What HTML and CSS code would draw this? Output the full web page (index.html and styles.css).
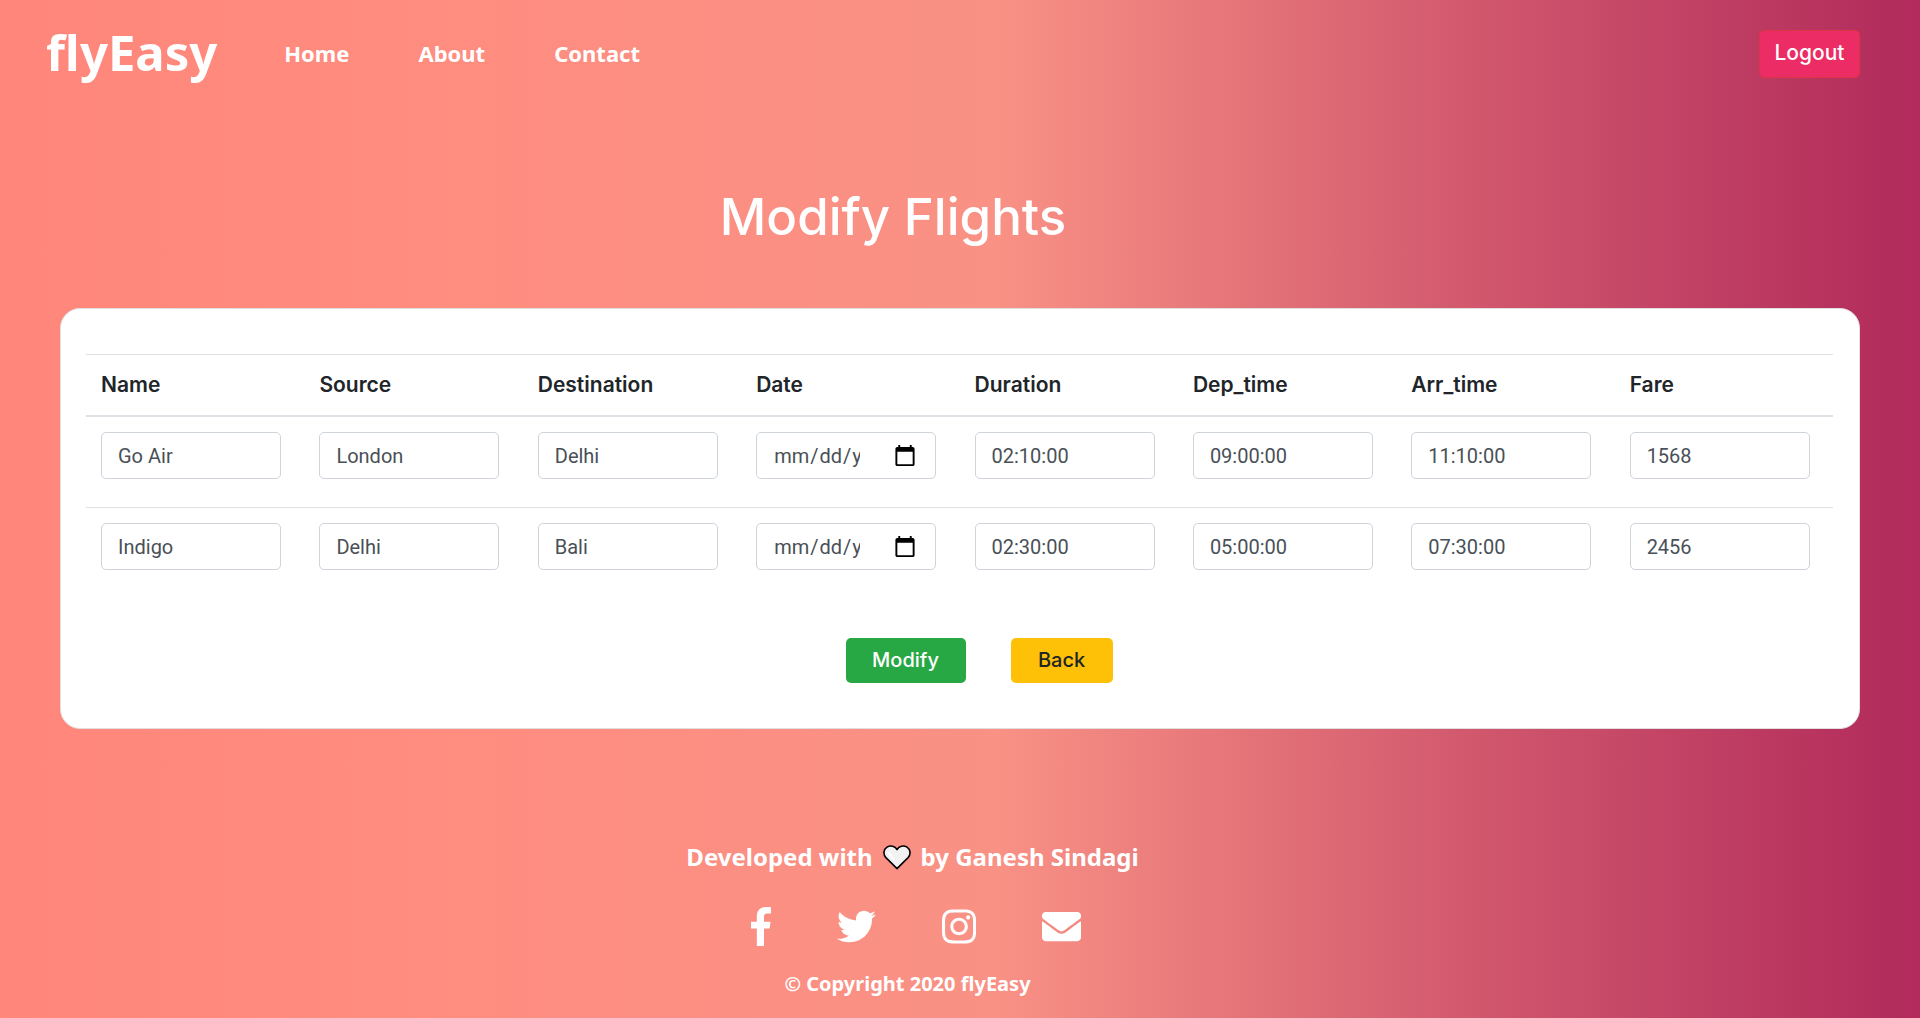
FILE: index.html
```html
<!DOCTYPE html>
<html lang="en">
<head>
<meta charset="utf-8">
<meta name="viewport" content="width=device-width, initial-scale=1">
<title>flyEasy - Modify Flights</title>
<link rel="stylesheet" href="styles.css">
</head>
<body>
<header class="navbar">
  <a class="brand" href="#">flyEasy</a>
  <nav class="nav-links">
    <a href="#">Home</a>
    <a href="#">About</a>
    <a href="#">Contact</a>
  </nav>
  <button class="btn btn-logout" type="button">Logout</button>
</header>
<main>
  <h1 class="title">Modify Flights</h1>
  <form class="card">
    <table class="flights">
      <thead>
        <tr><th scope="col">Name</th><th scope="col">Source</th><th scope="col">Destination</th><th scope="col">Date</th><th scope="col">Duration</th><th scope="col">Dep_time</th><th scope="col">Arr_time</th><th scope="col">Fare</th></tr>
      </thead>
      <tbody>
        <tr>
          <td><input type="text" aria-label="Name" value="Go Air"></td>
          <td><input type="text" aria-label="Source" value="London"></td>
          <td><input type="text" aria-label="Destination" value="Delhi"></td>
          <td><input type="date" aria-label="Date"></td>
          <td><input type="text" aria-label="Duration" value="02:10:00"></td>
          <td><input type="text" aria-label="Departure time" value="09:00:00"></td>
          <td><input type="text" aria-label="Arrival time" value="11:10:00"></td>
          <td><input type="text" aria-label="Fare" value="1568"></td>
        </tr>
        <tr>
          <td><input type="text" aria-label="Name" value="Indigo"></td>
          <td><input type="text" aria-label="Source" value="Delhi"></td>
          <td><input type="text" aria-label="Destination" value="Bali"></td>
          <td><input type="date" aria-label="Date"></td>
          <td><input type="text" aria-label="Duration" value="02:30:00"></td>
          <td><input type="text" aria-label="Departure time" value="05:00:00"></td>
          <td><input type="text" aria-label="Arrival time" value="07:30:00"></td>
          <td><input type="text" aria-label="Fare" value="2456"></td>
        </tr>
      </tbody>
    </table>
    <div class="actions">
      <button class="btn btn-modify" type="submit">Modify</button>
      <button class="btn btn-back" type="button">Back</button>
    </div>
  </form>
</main>
<footer class="footer">
  <p class="credit">Developed with
    <svg class="heart" viewBox="0 0 28 25" role="img" aria-label="love"><path d="M14 23.6 2.9 12.6C-.2 9.300.6 4.200 4 2.100 7.600-.1 12 1 14 4.600 16 1 20.400-.1 24 2.100 27.400 4.200 28.200 9.300 25.100 12.600Z" fill="#f2f2f2" stroke="#000" stroke-width="1.600" stroke-linejoin="round"/><path d="M5 7.500c1 4 3.500 6.500 6.500 8.500 1-1 .6-2.400-.6-3.800C9 10 6.500 6 5 7.500Z" fill="#fff"/></svg>
    by Ganesh Sindagi</p>
  <div class="social">
    <a href="#" aria-label="Facebook"><svg viewBox="0 0 264 512"><path d="M76.7 512V283H0v-91h76.700v-71.700C76.700 42.400 124.300 0 193.800 0c33.300 0 61.900 2.500 70.200 3.600V85h-48.200c-37.800 0-45.100 18-45.100 44.300V192H256l-11.700 91h-73.600v229z"/></svg></a>
    <a href="#" aria-label="Twitter"><svg viewBox="0 0 512 512"><path d="M459.370 151.716c.325 4.548.325 9.097.325 13.645 0 138.720-105.583 298.558-298.558 298.558-59.452 0-114.680-17.219-161.137-47.106 8.447.974 16.568 1.299 25.340 1.299 49.055 0 94.213-16.568 130.274-44.832-46.132-.975-84.792-31.188-98.112-72.772 6.498.974 12.995 1.624 19.818 1.624 9.421 0 18.843-1.300 27.614-3.573-48.081-9.747-84.143-51.980-84.143-102.985v-1.299c13.969 7.797 30.214 12.670 47.431 13.319-28.264-18.843-46.781-51.005-46.781-87.391 0-19.492 5.197-37.360 14.294-52.954 51.655 63.675 129.300 105.258 216.365 109.807-1.624-7.797-2.599-15.918-2.599-24.040 0-57.828 46.782-104.934 104.934-104.934 30.213 0 57.502 12.670 76.670 33.137 23.715-4.548 46.456-13.320 66.599-25.340-7.798 24.366-24.366 44.833-46.132 57.827 21.117-2.273 41.584-8.122 60.426-16.243-14.292 20.791-32.161 39.308-52.628 54.253z"/></svg></a>
    <a href="#" aria-label="Instagram"><svg viewBox="0 0 448 512"><path d="M224.100 141c-63.600 0-114.900 51.300-114.900 114.900s51.300 114.900 114.900 114.900S339 319.500 339 255.900 287.700 141 224.100 141zm0 189.600c-41.100 0-74.700-33.500-74.700-74.700s33.500-74.700 74.700-74.700 74.700 33.500 74.700 74.700-33.600 74.700-74.700 74.700zm146.400-194.300c0 14.900-12 26.800-26.800 26.800-14.900 0-26.800-12-26.800-26.800s12-26.800 26.800-26.800 26.800 12 26.800 26.800zm76.100 27.200c-1.700-35.900-9.900-67.700-36.200-93.900-26.200-26.200-58-34.400-93.900-36.200-37-2.100-147.900-2.100-184.900 0-35.800 1.700-67.600 9.900-93.900 36.100s-34.400 58-36.200 93.900c-2.100 37-2.100 147.900 0 184.900 1.700 35.900 9.900 67.700 36.200 93.900s58 34.400 93.900 36.200c37 2.100 147.900 2.100 184.900 0 35.900-1.700 67.700-9.900 93.900-36.200 26.200-26.200 34.400-58 36.200-93.900 2.100-37 2.100-147.800 0-184.800zM398.800 388c-7.800 19.600-22.900 34.700-42.600 42.600-29.500 11.700-99.500 9-132.100 9s-102.700 2.600-132.100-9c-19.600-7.800-34.700-22.900-42.600-42.600-11.700-29.500-9-99.500-9-132.100s-2.600-102.700 9-132.100c7.800-19.600 22.900-34.700 42.600-42.600 29.500-11.700 99.500-9 132.100-9s102.700-2.600 132.100 9c19.600 7.800 34.700 22.900 42.600 42.600 11.700 29.500 9 99.500 9 132.100s2.700 102.700-9 132.100z"/></svg></a>
    <a href="#" aria-label="Email"><svg viewBox="0 0 512 512"><path d="M502.300 190.800c3.900-3.100 9.700-.2 9.700 4.700V400c0 26.500-21.500 48-48 48H48c-26.500 0-48-21.500-48-48V195.600c0-5 5.700-7.800 9.700-4.700 22.400 17.400 52.100 39.500 154.100 113.600 21.100 15.400 56.700 47.800 92.200 47.600 35.700.3 72-32.800 92.300-47.600 102-74.100 131.600-96.300 154-113.700zM256 320c23.200.4 56.600-29.200 73.400-41.400 132.700-96.300 142.800-104.700 173.400-128.700 5.800-4.500 9.200-11.500 9.200-18.900v-19c0-26.500-21.500-48-48-48H48c-26.500 0-48 21.500-48 48v19c0 7.400 3.400 14.300 9.200 18.900 30.600 23.900 40.700 32.400 173.400 128.700 16.800 12.200 50.200 41.800 73.400 41.400z"/></svg></a>
  </div>
  <p class="copyright">© Copyright 2020 flyEasy</p>
</footer>
</body>
</html>
```
FILE: styles.css
```css
* { box-sizing: border-box; }
body {
  margin: 0;
  min-height: 100vh;
  font: 500 20px/30px Inter, sans-serif;
  color: #212529;
  background: linear-gradient(to right, #ff867a 0%, #ff8c7f 21%, #f99185 52%, #cf556c 78%, #b12a5b 100%);
}
a { color: #fff; text-decoration: none; }
.navbar {
  display: flex;
  align-items: center;
  height: 108px;
  padding: 0 60px 0 46px;
  font-family: "Noto Sans", sans-serif;
  font-weight: 700;
}
.brand { padding-bottom: 4px; font-size: 49px; line-height: 60px; }
.nav-links { display: flex; gap: 69px; margin-left: 67px; padding-bottom: 2px; font-size: 22px; }
.btn {
  height: 45px;
  padding: 0 0 2px;
  border: 0;
  border-radius: 5px;
  font: 500 20px/30px Inter, sans-serif;
  cursor: pointer;
}
.btn-logout {
  width: 101px;
  height: 48px;
  margin-left: auto;
  border: 1px solid #dc3545;
  background: #ec2c64;
  color: #fff;
  font-size: 21px;
}
.title {
  margin: 79px 0 61px;
  padding-right: 134px;
  text-align: center;
  color: #fff;
  font-size: 51px;
  font-weight: 500;
  line-height: 60px;
}
.card {
  margin: 0 60px;
  padding: 45px 26px 45px 25px;
  border: 1px solid #dfdfdf;
  border-radius: 20px;
  background: #fff;
}
.flights { width: 100%; border-collapse: collapse; table-layout: fixed; }
.flights th {
  padding: 15px;
  border-top: 1px solid #dee2e6;
  border-bottom: 2px solid #dee2e6;
  text-align: left;
  font-size: 21px;
  font-weight: 600;
}
.flights td { padding: 15px 15px 28px; border-top: 1px solid #dee2e6; }
.flights input {
  display: block;
  width: 180px;
  max-width: 100%;
  height: 47px;
  padding: 8px 15px 8px 16px;
  border: 1px solid #ced4da;
  border-radius: 5px;
  background: #fff;
  color: #495057;
  font: 400 20px/30px Roboto, sans-serif;
}
.flights input::-webkit-calendar-picker-indicator {
  width: 24px;
  height: 24px;
  margin-left: 30px;
  padding: 3px;
  box-sizing: content-box;
}
.actions { display: flex; justify-content: center; gap: 45px; margin-top: 40px; padding-left: 39px; }
.btn-modify { width: 120px; background: #28a745; color: #fff; }
.btn-back { width: 102px; background: #ffc107; color: #212529; }
.footer {
  display: flex;
  flex-direction: column;
  align-items: center;
  padding: 113px 95px 18px 0;
  color: #fff;
  font-family: "Noto Sans", sans-serif;
  font-weight: 700;
}
.footer p { margin: 0; }
.credit { display: flex; align-items: center; gap: 10px; font-size: 24px; }
.heart { width: 28px; height: 25px; }
.social { display: flex; gap: 66px; margin: 35px 0 23px; padding-left: 7px; }
.social a, .social svg { display: block; height: 39px; }
.social svg { fill: #fff; }
.copyright { padding-right: 10px; font-size: 20px; }
```
